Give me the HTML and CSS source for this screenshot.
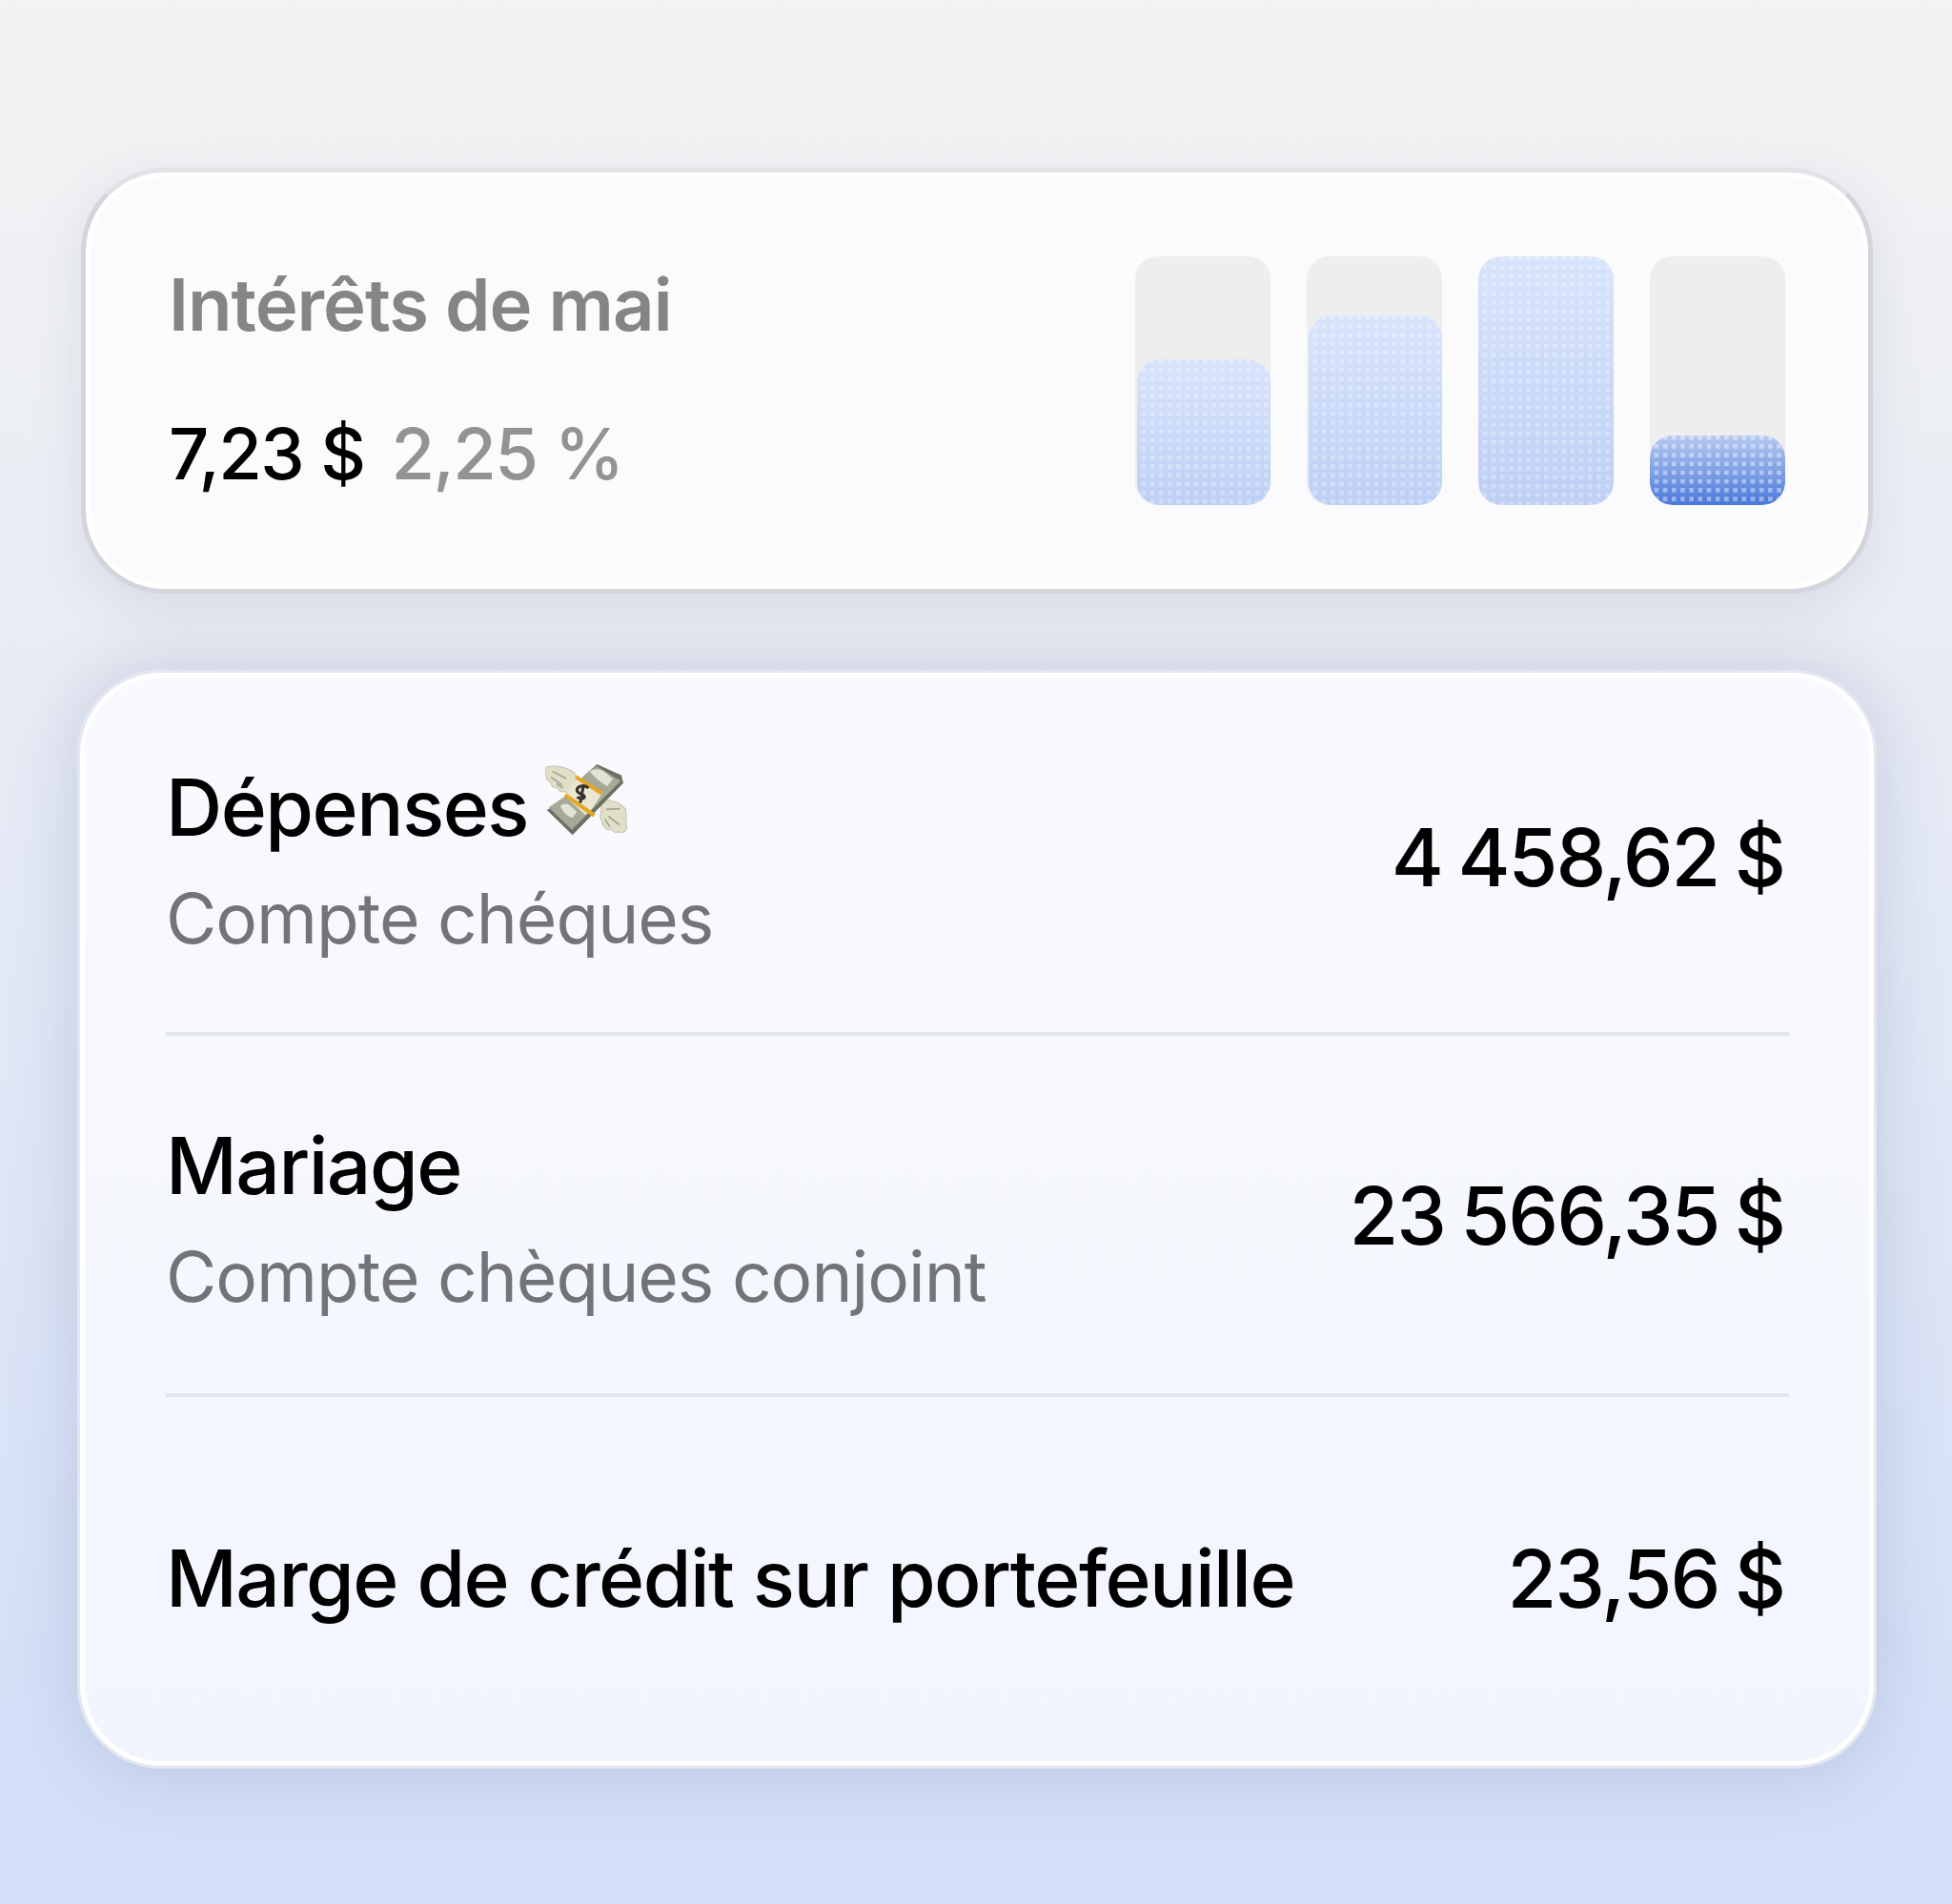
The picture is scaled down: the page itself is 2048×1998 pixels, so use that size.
FILE: index.html
```html
<!DOCTYPE html>
<html lang="fr">
<head>
    <meta charset="UTF-8">
    <title>Comptes</title>
    <link rel="stylesheet" href="styles.css">
</head>
<body>
    <main class="page">

        <section class="card card-interest">
            <div class="interest-text">
                <h2 class="interest-title">Intérêts de mai</h2>
                <p class="interest-values"><span class="interest-amount">7,23&nbsp;$</span> <span class="interest-rate">2,25&nbsp;%</span></p>
            </div>
            <div class="bars">
                <div class="bar"><div class="bar-fill bar-inset" style="height: 153px"></div></div>
                <div class="bar"><div class="bar-fill bar-inset" style="height: 199px"></div></div>
                <div class="bar"><div class="bar-fill" style="height: 261px"></div></div>
                <div class="bar"><div class="bar-fill bar-current" style="height: 73px"></div></div>
            </div>
        </section>

        <section class="card card-accounts">
            <div class="account">
                <div class="account-text">
                    <div class="account-name">Dépenses
                        <!-- money with wings -->
                        <svg class="emoji" viewBox="105 65 255 225" width="86" height="76" aria-hidden="true">
                            <path d="M110 76c24-6 62 0 86 18l12 24-18 36c-6 6-14 4-22 0l-16-2-10-12-14-2-8-16-10-6-2-18-4-12z" fill="#e2dfc9" stroke="#c4c1a8" stroke-width="3"/>
                            <path d="M128 90l42 22M122 108l36 24M140 128l20 14" stroke="#a6a590" stroke-width="5" fill="none"/>
                            <path d="M268 184c34-10 72 0 88 26l2 58c-4 12-14 14-22 10l-12 2-14-8-14-2-12-14-8-26 4-24z" fill="#e2dfc9" stroke="#c4c1a8" stroke-width="3"/>
                            <path d="M294 208l44-2M302 230l34 26M290 238l16 24" stroke="#a6a590" stroke-width="5" fill="none"/>
                            <path d="M110 210l80 78 158-162-6-24-76-34-40 36-36 44-42 42z" fill="#6b7064"/>
                            <path d="M116 202l72 70 152-152-74-46c-18 8-34 24-46 42-10 20-30 26-42 44z" fill="#a5a996"/>
                            <path d="M244 90c14-10 32-8 46 2l26 22-18 22c-16-10-36-22-54-46zM152 198c14-12 24-8 34 2l18 16-14 18c-14-2-30-18-38-36z" fill="#e3e4d7"/>
                            <path d="M204 108l78 52-34 50-18 16-62-58 20-32z" fill="#ebe6d2"/>
                            <path d="M203 102l82 52-6 10-82-52zM170 158l92 64-8 10-90-64z" fill="#e5a823"/>
                            <path d="M240 142c-10-10-32-10-36 4-3 12 16 14 22 20 5 6-4 14-22 4M224 134l-10 54" fill="none" stroke="#33312c" stroke-width="9"/>
                        </svg>
                    </div>
                    <div class="account-type">Compte chéques</div>
                </div>
                <div class="account-balance">4&nbsp;458,62&nbsp;$</div>
            </div>
            <div class="account">
                <div class="account-text">
                    <div class="account-name">Mariage</div>
                    <div class="account-type">Compte chèques conjoint</div>
                </div>
                <div class="account-balance">23&nbsp;566,35&nbsp;$</div>
            </div>
            <div class="account">
                <div class="account-text account-text-single">
                    <div class="account-name">Marge de crédit sur portefeuille</div>
                </div>
                <div class="account-balance">23,56&nbsp;$</div>
            </div>
        </section>

    </main>
</body>
</html>
```

FILE: styles.css
```css
html, body {
    margin: 0;
    padding: 0;
}
body {
    background: linear-gradient(180deg, #f3f3f3 0%, #f0f1f3 10%, #d3dff8 95%, #d3dff8 100%);
    min-height: 1998px;
    font-family: 'Inter', 'Liberation Sans', sans-serif;
    color: #000;
}
.page {
    display: flex;
    flex-direction: column;
    gap: 80px;
    padding: 176px 79px 0 81px;
}
.card {
    box-sizing: border-box;
    border-radius: 88px;
}

/* Top card */
.card-interest {
    display: flex;
    justify-content: space-between;
    align-items: stretch;
    height: 447px;
    margin: 0 4px;
    padding: 88px 87px 87px 87px;
    background: #fbfbfd;
    border: 5px solid #d3d5db;
    border-top-color: #e0e2e6;
    box-shadow: inset 0 0 0 5px #ffffff, 0 14px 50px rgba(120, 130, 160, 0.16);
}
.interest-title {
    margin: 6px 0 0;
    font-size: 76px;
    line-height: 88px;
    font-weight: 600;
    letter-spacing: -1px;
    color: #858583;
}
.interest-values {
    margin: 70px 0 0;
    font-size: 74px;
    line-height: 86px;
    font-weight: 500;
    letter-spacing: -1.6px;
}
.interest-amount {
    color: #000;
}
.interest-rate {
    margin-left: 10px;
    color: #929393;
}
.bars {
    display: flex;
    gap: 38px;
}
.bar {
    display: flex;
    align-items: flex-end;
    width: 142px;
    height: 261px;
    background: #eeeeef;
    border-radius: 24px;
    overflow: hidden;
}
.bar-fill {
    flex: 1;
    border-radius: 24px;
    background-image:
        conic-gradient(rgba(255, 255, 255, 0.3) 25%, transparent 0),
        linear-gradient(180deg, #d8e4fc 0%, #bdcff5 100%);
    background-size: 9.2px 9.2px, 100% 100%;
}
.bar-inset {
    margin-left: 2px;
}
.bar-current {
    background-image:
        conic-gradient(rgba(255, 255, 255, 0.42) 25%, transparent 0),
        linear-gradient(180deg, #b6c9f1 0%, #4a79da 100%);
}

/* Accounts card */
.card-accounts {
    height: 1153px;
    padding: 8px 89px 0 90px;
    background: linear-gradient(180deg, #f9fafe 0%, #f2f5fe 100%);
    border: 3px solid #e4e7ef;
    box-shadow: inset 0 0 0 5px #ffffff, 0 0 70px rgba(90, 105, 150, 0.24);
}
.account {
    box-sizing: border-box;
    display: flex;
    justify-content: space-between;
    align-items: center;
    height: 379px;
    border-bottom: 4px solid #e4e6ee;
}
.account:first-child {
    height: 373px;
}
.account:last-child {
    border-bottom: 0;
}
.account-text {
    padding-top: 9px;
}
.account-text-single {
    padding-top: 2px;
}
.account-name {
    display: flex;
    align-items: center;
    gap: 18px;
    font-size: 82px;
    line-height: 96px;
    font-weight: 500;
    letter-spacing: -1.5px;
}
.emoji {
    margin-top: -18px;
}
.account-type {
    margin-top: 25px;
    font-size: 73px;
    line-height: 86px;
    letter-spacing: -1px;
    color: #72747a;
}
.account-balance {
    margin-right: 5px;
    padding-top: 3px;
    font-size: 84px;
    line-height: 96px;
    font-weight: 500;
    letter-spacing: -2px;
    word-spacing: -4px;
}
```
